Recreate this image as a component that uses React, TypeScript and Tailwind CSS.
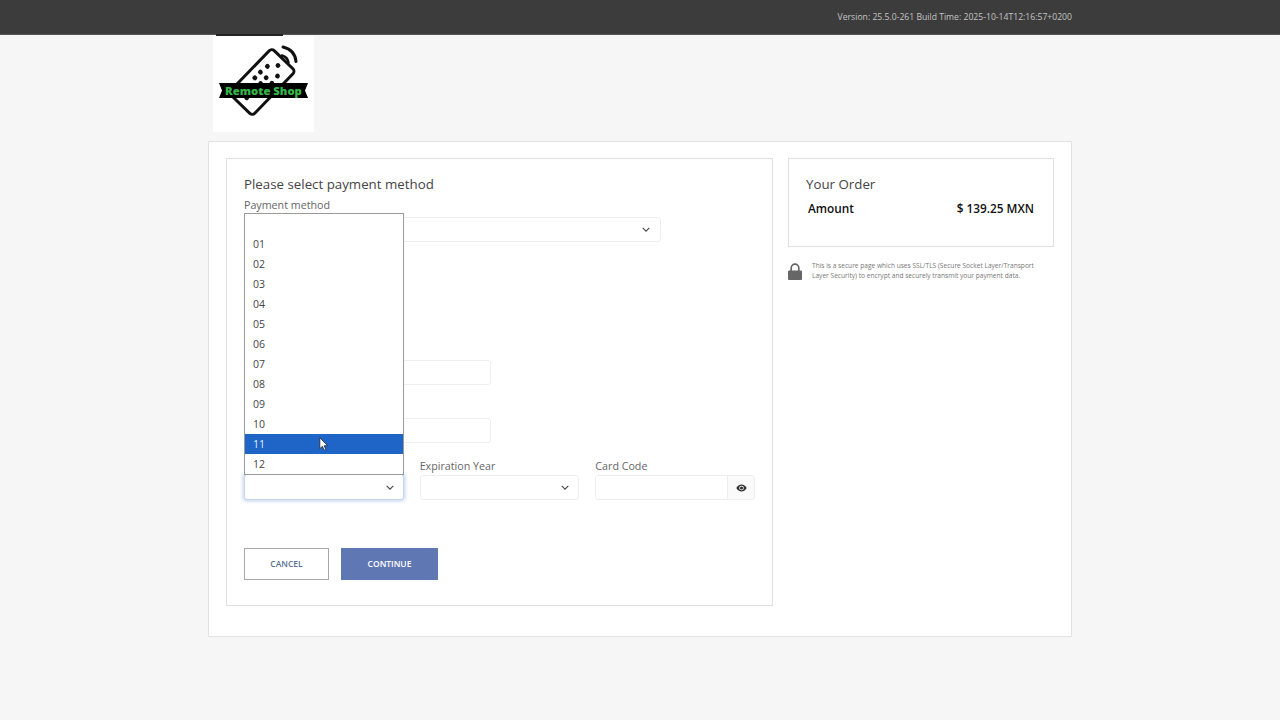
const F = "[font-family:'Open_Sans',sans-serif]";

function Chevron() {
  return (
    <svg width="8" height="5" viewBox="0 0 8 5" fill="none" stroke="#444" strokeWidth="1.1" className="shrink-0">
      <path d="M.7.8L4 4.100 7.300.8" />
    </svg>
  );
}

function Logo() {
  return (
    <svg width="101" height="96" viewBox="0 0 101 96" className="block">
      <g transform="translate(49 46) rotate(44)" fill="none">
        <rect x="-16.500" y="-31" width="33" height="62" rx="3.500" fill="#fff" stroke="#111" strokeWidth="3" />
        {[
          [0, -23],
          [-7, -15], [7, -15],
          [-8, -6], [0, -6], [8, -6],
          [-8, 2], [0, 2], [8, 2],
          [0, 22],
        ].map(([x, y]) => (
          <circle key={`${x},${y}`} cx={x} cy={y} r="2.400" fill="#111" />
        ))}
      </g>
      <path d="M69 19.500Q74.500 21 75.500 26.500" fill="none" stroke="#111" strokeWidth="2.600" strokeLinecap="round" />
      <path d="M70 11Q82 14 83 25.500" fill="none" stroke="#111" strokeWidth="3" strokeLinecap="round" />
      <path d="M6 47h89l-3 7.500 3 7.500H6l3-7.500z" fill="#000" />
      <text x="50.500" y="59" textAnchor="middle" fontSize="11.300" fontWeight="800" fill="#35b74a" fontFamily="'Open Sans',sans-serif">
        Remote Shop
      </text>
    </svg>
  );
}

function FieldBox({ className, chevron }: { className: string; chevron?: boolean }) {
  return (
    <div className={`h-[25px] bg-white border border-[#eeeeee] rounded-[3px] flex items-center justify-end ${className}`}>
      {chevron && <Chevron />}
    </div>
  );
}

const months = ["", "01", "02", "03", "04", "05", "06", "07", "08", "09", "10", "11", "12"];

export default function App() {
  return (
    <div className={`${F} w-[1280px] h-[720px] overflow-hidden bg-[#f6f6f6] text-[#444]`}>
      <header className="h-[35px] bg-[#3c3c3c] border-b border-[#555] flex items-center justify-end pr-[208px]">
        <span className="text-[8.650px] text-[#c4c4c4]">Version: 25.5.0-261 Build Time: 2025-10-14T12:16:57+0200</span>
      </header>

      <div className="w-[864px] ml-[208px]">
        <div className="relative ml-[5px] w-[101px] h-[96px] mt-px bg-white">
          <div className="absolute left-[3px] -top-[2px] w-[67px] h-[2px] bg-[#222]" />
          <Logo />
        </div>

        <main className="mt-[9px] h-[496px] bg-white border border-[#e2e2e2] pt-[16px] pl-[17px] pr-[18px] flex items-start gap-[15px]">
          <section className="relative w-[547px] h-[448px] shrink-0 border border-[#e0e0e0] pt-[15px] px-[17px]">
            <h2 className="text-[13.300px] leading-5 text-[#444]">Please select payment method</h2>
            <div className="mt-[3px] text-[10.700px] leading-4 text-[#666]">Payment method</div>
            <FieldBox className="mt-[4px] w-[417px] pr-[10px]" chevron />
            <div className="h-[118px]" />
            <FieldBox className="w-[247px]" />
            <div className="h-[33px]" />
            <FieldBox className="w-[247px]" />

            <div className="mt-[14px] flex gap-4">
              <div className="w-[160px]">
                <div className="h-[17px]" />
                <div className="h-[26px] bg-white border border-[#c5d6ec] rounded-[3px] shadow-[0_0_3px_2px_#d3e1f4] flex items-center justify-end pr-[9px]">
                  <Chevron />
                </div>
              </div>
              <div className="w-[160px]">
                <div className="h-[17px] text-[10.700px] leading-[19px] text-[#666]">Expiration Year</div>
                <FieldBox className="w-full mt-px pr-[9px]" chevron />
              </div>
              <div className="w-[160px]">
                <div className="h-[17px] text-[10.700px] leading-[19px] text-[#666]">Card Code</div>
                <div className="mt-px h-[25px] flex border border-[#eeeeee] rounded-[3px] overflow-hidden">
                  <div className="flex-1 bg-white" />
                  <div className="w-[27px] bg-[#fafafa] border-l border-[#eeeeee] flex items-center justify-center">
                    <svg width="11" height="8" viewBox="0 0 11 8">
                      <path d="M.3 4C1.500 1.800 3.300.6 5.500.6S9.500 1.800 10.700 4C9.500 6.200 7.700 7.400 5.500 7.400S1.500 6.200.3 4z" fill="#333" />
                      <circle cx="5.500" cy="4" r="2.300" fill="#fff" />
                      <circle cx="5.500" cy="4" r="1.600" fill="#333" />
                    </svg>
                  </div>
                </div>
              </div>
            </div>

            <div className="mt-[48px] flex gap-3">
              <button className="w-[85px] h-[32px] bg-white border border-[#a8a8a8] text-[8.500px] font-semibold text-[#5a6f94]">CANCEL</button>
              <button className="w-[97px] h-[32px] bg-[#5f77b3] text-[8.500px] font-semibold text-white">CONTINUE</button>
            </div>

            <div className="absolute left-[17px] top-[54px] w-[160px] h-[262px] bg-white border border-[#9a9a9a]">
              {months.map((m) => (
                <div
                  key={m || "blank"}
                  className={`h-[20px] px-2 text-[10.500px] leading-[20px] ${m === "11" ? "bg-[#1f65c8] text-[#e8f0fb]" : "text-[#444]"}`}
                >
                  {m}
                </div>
              ))}
              <svg width="9" height="14" viewBox="0 0 8 13" className="absolute left-[74px] top-[223px]">
                <path d="M.6.6v10.200l2.400-2.200 1.600 3.600 1.500-.7-1.500-3.400h3.100z" fill="#fff" stroke="#222" strokeWidth=".7" />
              </svg>
            </div>
          </section>

          <aside className="w-[266px] shrink-0">
            <div className="h-[89px] border border-[#e0e0e0] pt-[15px] pl-[17px] pr-[19px]">
              <h2 className="text-[13.300px] leading-5 text-[#444]">Your Order</h2>
              <div className="mt-[4px] pl-[2px] flex justify-between text-[11.800px] leading-5 font-semibold text-[#111]">
                <span>Amount</span>
                <span>$ 139.25 MXN</span>
              </div>
            </div>
            <div className="mt-[14px] flex items-start gap-[10px]">
              <svg width="14" height="17" viewBox="0 0 14 17" className="shrink-0 mt-[2px]">
                <path d="M3.200 8V5a3.800 3.800 0 0 1 7.600 0v3" fill="none" stroke="#666" strokeWidth="1.700" />
                <rect x="0" y="7.500" width="14" height="9.500" rx="1" fill="#666" />
              </svg>
              <p className="w-[236px] text-[6.600px] leading-[10px] text-[#777]">
                This is a secure page which uses SSL/TLS (Secure Socket Layer/Transport Layer Security) to encrypt and securely transmit your payment data.
              </p>
            </div>
          </aside>
        </main>
      </div>
    </div>
  );
}
